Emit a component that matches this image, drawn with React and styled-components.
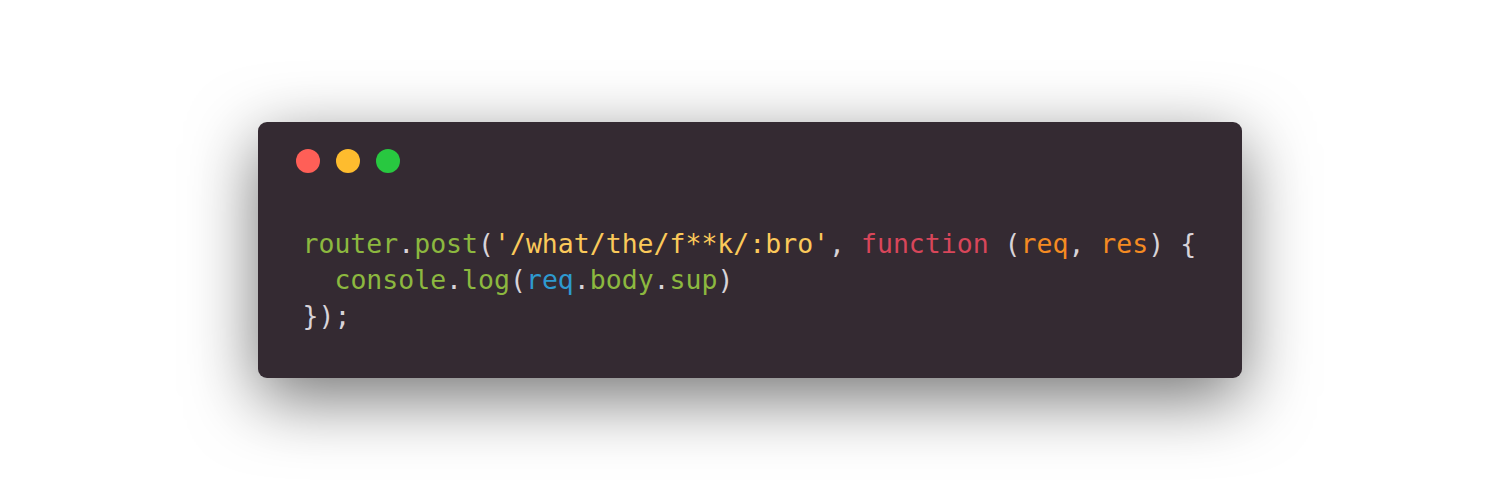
import React from "react"
import styled, { createGlobalStyle } from "styled-components"

const Global = createGlobalStyle`
  html, body {
    margin: 0;
    padding: 0;
    background: #ffffff;
  }
`

const Page = styled.div`
  display: flex;
  justify-content: center;
  padding-top: 122px;
  height: 500px;
  box-sizing: border-box;
`

const Window = styled.div`
  width: 984px;
  height: 256px;
  box-sizing: border-box;
  background: #342a32;
  border-radius: 9px;
  box-shadow: 0 20px 68px rgba(0, 0, 0, 0.55);
  padding: 27px 38px 0 38px;
`

const Controls = styled.div`
  display: flex;
  gap: 16px;
`

const Dot = styled.span`
  width: 24px;
  height: 24px;
  border-radius: 50%;
  background: ${(p) => p.color};
`

const Code = styled.pre`
  margin: 53px 0 0 7px;
  font-family: "DejaVu Sans Mono", monospace;
  font-size: 26.5px;
  line-height: 36px;
  color: #d8d3d8;
`

const Tok = styled.span`
  color: ${(p) => p.c};
`

const green = "#8cb83f"
const yellow = "#fbc95a"
const red = "#d8465a"
const orange = "#f58b22"
const blue = "#2e9ad0"

const App = () => {
  return (
    <>
      <Global />
      <Page>
        <Window>
          <Controls>
            <Dot color="#ff5f57" />
            <Dot color="#febc2e" />
            <Dot color="#28c840" />
          </Controls>
          <Code>
            <Tok c={green}>router</Tok>.<Tok c={green}>post</Tok>(
            <Tok c={yellow}>'/what/the/f**k/:bro'</Tok>,{" "}
            <Tok c={red}>function</Tok> (<Tok c={orange}>req</Tok>,{" "}
            <Tok c={orange}>res</Tok>) {"{"}
            {"\n  "}
            <Tok c={green}>console</Tok>.<Tok c={green}>log</Tok>(
            <Tok c={blue}>req</Tok>.<Tok c={green}>body</Tok>.
            <Tok c={green}>sup</Tok>)
            {"\n"}
            {"});"}
          </Code>
        </Window>
      </Page>
    </>
  )
}

export default App
